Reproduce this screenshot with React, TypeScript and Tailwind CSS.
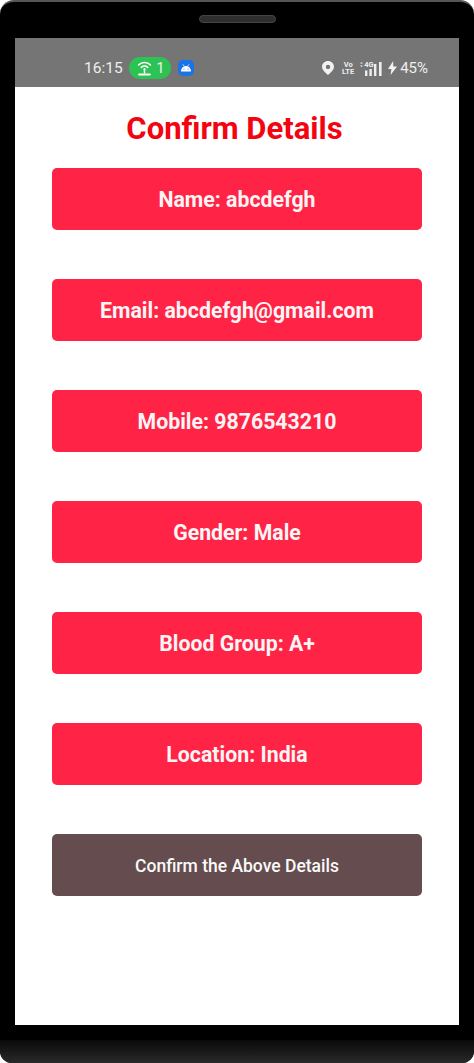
const rows = [
  "Name: abcdefgh",
  "Email: abcdefgh@gmail.com",
  "Mobile: 9876543210",
  "Gender: Male",
  "Blood Group: A+",
  "Location: India",
];

function HotspotIcon() {
  return (
    <svg width="17" height="15" viewBox="0 0 16 14" fill="none" stroke="#fff" strokeWidth="1.5" strokeLinecap="round">
      <path d="M2.5 3.6C5.5 .7 10.5 .7 13.5 3.6" />
      <path d="M5 6C6.7 4.4 9.3 4.4 11 6" />
      <circle cx="8" cy="7.6" r="1" fill="#fff" stroke="none" />
      <path d="M8 8V11" strokeWidth="1.4" />
      <path d="M3 12.6H13" strokeWidth="2" />
    </svg>
  );
}

function AndroidBadge() {
  return (
    <div className="w-4 h-4 rounded-[5px] bg-[#1a73e8] flex items-center justify-center">
      <svg width="12" height="8" viewBox="0 0 12 8" fill="#fff">
        <path d="M1 7.5C1 4.4 3.2 2 6 2s5 2.4 5 5.5H1z" />
        <path d="M3 .4l1.3 2M9 .4L7.7 2.4" stroke="#fff" strokeWidth="0.8" />
        <circle cx="4" cy="5" r="0.6" fill="#1a73e8" />
        <circle cx="8" cy="5" r="0.6" fill="#1a73e8" />
      </svg>
    </div>
  );
}

function PinIcon() {
  return (
    <svg width="12" height="14" viewBox="0 0 12 14">
      <path
        fillRule="evenodd"
        fill="#f2f2f2"
        d="M6 0C2.7 0 0 2.6 0 5.8 0 9.6 6 14 6 14s6-4.4 6-8.2C12 2.6 9.3 0 6 0zm0 3.7a2.2 2.2 0 1 1 0 4.4 2.2 2.2 0 0 1 0-4.4z"
      />
    </svg>
  );
}

function SignalIcon() {
  return (
    <div className="relative w-[25px] h-[15px]">
      <span className="absolute left-[5px] top-[-1px] text-[7.5px] leading-[9px] font-bold text-[#eeeeee]">4G</span>
      <svg className="absolute inset-0" width="25" height="15" viewBox="0 0 25 15" fill="#eeeeee">
        <path d="M1 2.5L2.5 1 4 2.5zM1 4.5h3L2.5 6z" />
        <rect x="6" y="9.5" width="2.4" height="5.5" />
        <rect x="10.4" y="8" width="2.4" height="7" />
        <rect x="15" y="3" width="2.4" height="12" />
        <rect x="20" y="1" width="2.6" height="14" />
      </svg>
    </div>
  );
}

function BoltIcon() {
  return (
    <svg width="9" height="14" viewBox="0 0 9 14" fill="#f2f2f2">
      <path d="M5.2 0L0 8h3.4L2.6 14 9 5.4H5.2z" />
    </svg>
  );
}

function StatusBar() {
  return (
    <div className="h-[49px] bg-[#757575] flex items-center pl-[69px] pr-[31px] pt-[11px] text-[#eeeeee]">
      <span className="text-[15.5px] leading-none w-[45px] pt-[1px]">16:15</span>
      <div className="w-[42px] h-[22px] rounded-full bg-[#2dc254] flex items-center justify-center gap-[4px] text-[14px] text-[#f4f4f4]">
        <HotspotIcon />
        <span className="leading-none">1</span>
      </div>
      <div className="ml-[7px]">
        <AndroidBadge />
      </div>
      <div className="ml-auto flex items-center">
        <PinIcon />
        <div className="ml-[9px] w-[10px] flex flex-col items-center text-[7.5px] leading-[7px] font-bold text-[#eeeeee]">
          <span>Vo</span>
          <span>LTE</span>
        </div>
        <div className="ml-[6px]">
          <SignalIcon />
        </div>
        <div className="ml-[4px]">
          <BoltIcon />
        </div>
        <span className="ml-[3px] text-[15px] leading-none">45%</span>
      </div>
    </div>
  );
}

export default function App() {
  return (
    <div className="w-[474px] h-[1063px] bg-white font-['Roboto',sans-serif] overflow-hidden">
      <div className="h-full flex flex-col bg-black rounded-t-[14px] rounded-b-[12px] overflow-hidden border-t-2 border-[#555555]">
        {/* top bezel + speaker */}
        <div className="h-[36px] flex justify-center pt-[13px] shrink-0">
          <div className="w-[77px] h-[8px] rounded-full bg-[#2e2e2e] border border-[#444444]" />
        </div>

        {/* screen */}
        <div className="mx-[15px] h-[987px] bg-white shrink-0 flex flex-col">
          <StatusBar />
          <h1 className="mt-[23px] h-[38px] pr-[5px] text-center text-[31px] leading-[38px] font-bold text-[#f20410]">
            Confirm Details
          </h1>
          <div className="mt-[20px] px-[37px] flex flex-col gap-[49.5px]">
            {rows.map((row) => (
              <div
                key={row}
                className="h-[61.5px] pt-[2px] rounded-[5px] bg-[#ff2445] flex items-center justify-center text-[21.3px] font-bold text-[#fdf5f5]"
              >
                {row}
              </div>
            ))}
            <button className="h-[61.5px] pt-[3px] rounded-[5px] bg-[#654d4f] flex items-center justify-center text-[17.5px] font-medium text-[#fafafa]">
              Confirm the Above Details
            </button>
          </div>
        </div>

        {/* bottom bezel */}
        <div className="h-[15px] shrink-0" />
        <div className="flex-1 bg-gradient-to-b from-[#0a0a0a] to-[#2a2a2a]" />
      </div>
    </div>
  );
}
